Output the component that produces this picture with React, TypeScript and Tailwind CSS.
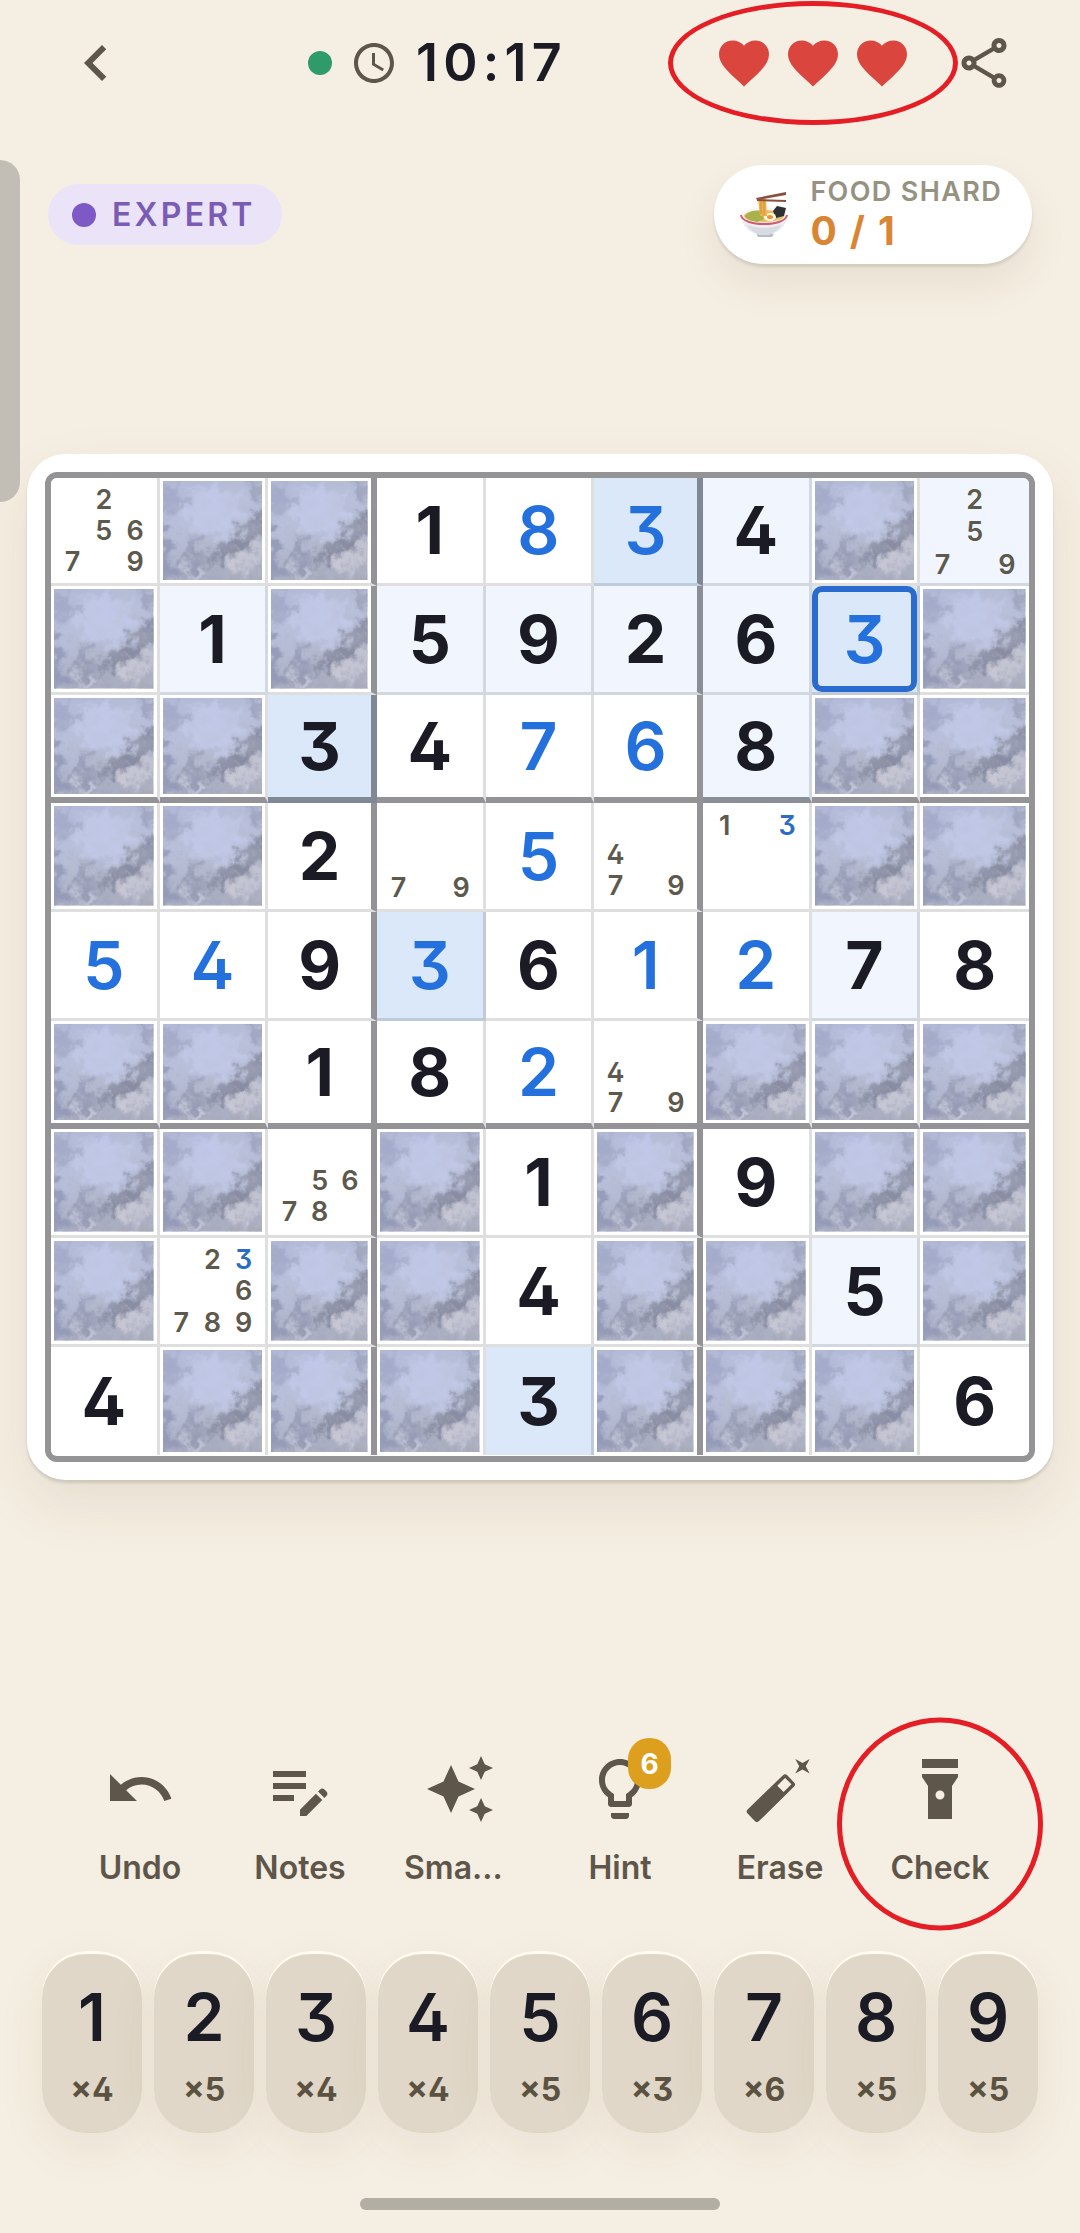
import { useState } from 'react';
import type { ReactNode } from 'react';
import clsx from 'clsx';
import {
  MdAccessTime,
  MdAutoAwesome,
  MdChevronLeft,
  MdEditNote,
  MdFavorite,
  MdFlashlightOn,
  MdLightbulbOutline,
  MdOutlineShare,
  MdUndo,
} from 'react-icons/md';

interface Cell {
  value?: number;
  given?: boolean;
  fog?: boolean;
  notes?: number[];
}

// '#' = fog, 'g' = given digit, 'u' = digit entered by the player, 'n' = notes
const PUZZLE = [
  'n25679 # # g1 u8 u3 g4 # n2579',
  '# g1 # g5 g9 g2 g6 u3 #',
  '# # g3 g4 u7 u6 g8 # #',
  '# # g2 n79 u5 n479 n13 # #',
  'u5 u4 g9 u3 g6 u1 u2 g7 g8',
  '# # g1 g8 u2 n479 # # #',
  '# # n5678 # g1 # g9 # #',
  '# n236789 # # g4 # # g5 #',
  'g4 # # # g3 # # # g6',
];

const parseCell = (token: string): Cell => {
  if (token === '#') return { fog: true };
  const digits = token.replace(/\D/g, '').split('').map(Number);
  if (token[0] === 'n') return { notes: digits };
  return { value: digits[0], given: token[0] === 'g' };
};

const BOARD = PUZZLE.map((row) => row.split(' ').map(parseCell));

const DIGITS = [1, 2, 3, 4, 5, 6, 7, 8, 9];
const REMAINING = [4, 5, 4, 4, 5, 3, 6, 5, 5];

const isPeer = (r: number, c: number, sr: number, sc: number) =>
  r === sr ||
  c === sc ||
  (Math.floor(r / 3) === Math.floor(sr / 3) && Math.floor(c / 3) === Math.floor(sc / 3));

const FogDefs = () => (
  <svg className="absolute size-0" aria-hidden="true">
    <defs>
      <linearGradient id="fogBase" x1="0" y1="0" x2="0.35" y2="1">
        <stop offset="0" stopColor="#b1b9d8" />
        <stop offset="0.45" stopColor="#b9c0da" />
        <stop offset="1" stopColor="#abafc2" />
      </linearGradient>
      <filter id="fogWarp" x="-20%" y="-20%" width="140%" height="140%">
        <feGaussianBlur stdDeviation="3" result="soft" />
        <feTurbulence type="fractalNoise" baseFrequency="0.08" numOctaves="5" seed="8" result="noise" />
        <feDisplacementMap in="soft" in2="noise" scale="34" xChannelSelector="R" yChannelSelector="G" />
        <feGaussianBlur stdDeviation="0.6" />
      </filter>
      <filter id="fogGrain" x="0" y="0" width="100%" height="100%">
        <feTurbulence type="fractalNoise" baseFrequency="0.05 0.07" numOctaves="5" seed="4" />
        <feColorMatrix values="0 0 0 0 0.48  0 0 0 0 0.51  0 0 0 0 0.62  2.8 0 0 0 -1.2" />
      </filter>
      <symbol id="fogTile" viewBox="0 0 100 100" preserveAspectRatio="none">
        <rect width="100" height="100" fill="url(#fogBase)" />
        <g filter="url(#fogWarp)">
          <ellipse cx="50" cy="30" rx="28" ry="26" fill="#c2caea" opacity="0.85" />
          <path d="M-8 40 L6 50 L12 100 L-8 105Z" fill="#858dae" opacity="0.65" />
          <path d="M-5 2 L14 4 L24 24 L0 38Z" fill="#989fc0" opacity="0.55" />
          <path d="M76 -4 L106 -4 L104 22 L90 14Z" fill="#8f95ad" opacity="0.6" />
          <path d="M108 28 L88 40 L66 58 L44 76 L54 88 L74 74 L108 54Z" fill="#7b8096" opacity="0.75" />
          <path d="M10 98 L30 56 L42 76 L46 98Z" fill="#8b92ac" opacity="0.7" />
          <ellipse cx="80" cy="80" rx="16" ry="9" fill="#cbcad6" opacity="0.9" />
          <ellipse cx="95" cy="66" rx="10" ry="8" fill="#c6c7d4" opacity="0.85" />
          <ellipse cx="30" cy="91" rx="13" ry="5" fill="#ccd0e0" opacity="0.85" />
          <path d="M60 104 L104 92 L104 106Z" fill="#a0a0a8" opacity="0.6" />
        </g>
        <rect width="100" height="100" filter="url(#fogGrain)" opacity="0.3" />
      </symbol>
    </defs>
  </svg>
);

const RamenIcon = () => (
  <svg viewBox="0 0 48 48" className="size-12" aria-hidden="true">
    <path d="M16 42h18l-2 4H18z" fill="#b9bcc4" />
    <path d="M1 24c0 11 9 20 23 20s23-9 23-20z" fill="#eeeff3" />
    <path d="M6 33c5 8 12 11 18 11s14-3 18-11c-8 5-28 5-36 0z" fill="#d9dbe3" />
    <ellipse cx="24" cy="24" rx="23" ry="8" fill="#f7f7f9" />
    <ellipse cx="24" cy="25" rx="20" ry="6" fill="#e3c264" />
    <path d="M5 25c3-5 9-6 15-5l4 8-7 3C10 30 6 28 5 25z" fill="#a9b14a" />
    <path d="M1 24c1 12 45 12 46 0" fill="none" stroke="#d2596b" strokeWidth="2" />
    <path d="M33 20l4-5 9 2-2 8-8 2z" fill="#2b3036" />
    <ellipse cx="30" cy="26" rx="6" ry="4" fill="#fdf6e8" />
    <ellipse cx="30" cy="26" rx="3" ry="2" fill="#f0932b" />
    <path d="M18 8h8l1 17h-7z" fill="#eeb04c" />
    <path d="M21 8v15M24 8v16" stroke="#d3923a" strokeWidth="1" />
    <path d="M16 7L46 1v3L17 9z" fill="#8a4f3d" />
    <path d="M17 8l29 1v2l-29-1z" fill="#8a4f3d" />
  </svg>
);

const EraseIcon = () => (
  <svg viewBox="0 0 24 24" className="size-[72px]" fill="currentColor" aria-hidden="true">
    <path
      fillRule="evenodd"
      d="M13 7.4a1 1 0 0 1 1.4 0l2.3 2.4a1 1 0 0 1 0 1.4L5 22.7a1 1 0 0 1-1.4 0L1.2 20.2a1 1 0 0 1 0-1.4zM13.7 8.3l-2.6 2.6 2.1 2.1 2.6-2.6z"
    />
    <path d="M17.1 2l2.4 1.3L21.9 2l-1.3 2.4 1.3 2.4-2.4-1.3-2.4 1.3 1.3-2.4z" />
  </svg>
);

const Notes = ({ notes, active }: { notes: number[]; active: number }) => (
  <span className="grid aspect-square w-full grid-cols-3 grid-rows-3 self-start p-[6px]">
    {DIGITS.map((d) => (
      <span
        key={d}
        className={clsx(
          'flex items-center justify-center text-[27px] leading-none font-semibold',
          d === active ? 'text-[#2b6cc4]' : 'text-[#5d594d]',
        )}
      >
        {notes.includes(d) ? d : ''}
      </span>
    ))}
  </span>
);

interface CellButtonProps {
  cell: Cell;
  row: number;
  col: number;
  selected: boolean;
  peer: boolean;
  activeDigit: number;
  onSelect: () => void;
}

const CellButton = ({ cell, row, col, selected, peer, activeDigit, onSelect }: CellButtonProps) => {
  const same = cell.value !== undefined && cell.value === activeDigit;
  return (
    <button
      type="button"
      aria-label={`Row ${row + 1}, column ${col + 1}`}
      onClick={onSelect}
      className={clsx(
        'relative flex min-h-0 min-w-0 items-center justify-center',
        col === 8 ? 'border-r-0' : col % 3 === 2 ? 'border-r-6' : 'border-r-3',
        row === 8 ? 'border-b-0' : row % 3 === 2 ? 'border-b-6' : 'border-b-3',
        col % 3 === 2 ? 'border-r-[#1a1a24]/47' : 'border-r-[#1a1a24]/14',
        row % 3 === 2 ? 'border-b-[#1a1a24]/47' : 'border-b-[#1a1a24]/14',
        same ? 'bg-[#dbe8f9]' : peer && !cell.fog ? 'bg-[#f1f6fe]' : 'bg-white',
      )}
    >
      {cell.fog && (
        <span className="flex size-full p-[3px]">
          <svg className="size-full" aria-hidden="true">
            <use href="#fogTile" width="100%" height="100%" />
          </svg>
        </span>
      )}
      {cell.notes && <Notes notes={cell.notes} active={activeDigit} />}
      {cell.value !== undefined && (
        <span
          className={clsx(
            'text-[66px] leading-none',
            cell.given ? 'font-bold text-[#1b1b25]' : 'font-semibold text-[#2470dc]',
          )}
        >
          {cell.value}
        </span>
      )}
      {selected && <span className="absolute inset-0 rounded-[10px] border-6 border-[#2a6bd0]" />}
    </button>
  );
};

interface ToolButtonProps {
  label: string;
  icon: ReactNode;
  truncated?: boolean;
  badge?: number;
  marked?: boolean;
}

const ToolButton = ({ label, icon, truncated, badge, marked }: ToolButtonProps) => (
  <button type="button" className="relative flex flex-1 flex-col items-center gap-[25px] pb-2 text-[#5e564a]">
    <span className="relative">
      {icon}
      {badge !== undefined && (
        <span className="absolute -top-[15px] -right-[15px] flex h-[51px] w-[43px] items-center justify-center rounded-[21px] bg-[#dd9f1e] text-[28px] leading-none font-bold text-white">
          {badge}
        </span>
      )}
    </span>
    <span className={clsx('text-[32px] leading-9 font-semibold', truncated && 'w-[112px] text-left')}>
      {label}
    </span>
    {marked && (
      <span className="absolute top-1/2 left-1/2 h-[213px] w-[206px] -translate-1/2 rounded-[50%] border-5 border-[#e51d24]" />
    )}
  </button>
);

export default function App() {
  const [selected, setSelected] = useState({ row: 1, col: 7 });
  const activeDigit = BOARD[selected.row][selected.col].value ?? 0;

  return (
    <div className="relative flex min-h-screen flex-col overflow-hidden bg-[#f5eee2] font-['Inter','Liberation_Sans',sans-serif] [font-feature-settings:'cv02','cv09']">
      <FogDefs />
      <div className="absolute top-40 left-0 h-[342px] w-5 rounded-r-[20px] bg-[#c2bdb5]" />

      <header className="flex h-[126px] items-center pr-[66px] pl-[60px] text-[#5e564a]">
        <button type="button" aria-label="Back">
          <MdChevronLeft className="size-[72px]" />
        </button>
        <div className="ml-44 flex items-center gap-[18px]">
          <span className="size-6 rounded-full bg-[#2f9b6b]" />
          <MdAccessTime className="size-12" />
          <span className="text-[52px] leading-none font-semibold tracking-widest text-[#1b1b25]">10:17</span>
        </div>
        <div className="relative ml-auto flex gap-[9px] text-[#da453d]">
          <MdFavorite className="size-[60px]" />
          <MdFavorite className="size-[60px]" />
          <MdFavorite className="size-[60px]" />
          <span className="absolute top-1/2 left-1/2 h-[124px] w-[290px] -translate-1/2 rounded-[50%] border-5 border-[#e51d24]" />
        </div>
        <button type="button" aria-label="Share" className="ml-[42px]">
          <MdOutlineShare className="size-[60px]" />
        </button>
      </header>

      <div className="mt-[39px] flex items-center justify-between px-12">
        <div className="flex h-[61px] items-center gap-4 rounded-full bg-[#ebe4f8] pr-[26px] pl-6">
          <span className="size-6 rounded-full bg-[#7e59c6]" />
          <span className="text-[32px] leading-none font-semibold tracking-widest text-[#7a5cb5]">EXPERT</span>
        </div>
        <div className="flex h-[99px] items-center gap-[22px] rounded-full bg-white pr-[30px] pl-[26px] shadow-[0_3px_3px_#0000001a,0_20px_40px_#5a461e14]">
          <RamenIcon />
          <div className="flex flex-col">
            <span className="text-[27px] leading-8 font-semibold tracking-wider text-[#969282]">FOOD SHARD</span>
            <span className="text-[39px] leading-[46px] font-bold tracking-wider text-[#d98634]">0 / 1</span>
          </div>
        </div>
      </div>

      <main className="flex flex-1 flex-col justify-center px-[27px]">
        <div className="rounded-[38px] bg-white p-[18px] shadow-[0_3px_3px_#0000001f,0_24px_60px_#5a461e17]">
          <div className="grid aspect-square grid-cols-9 grid-rows-9 overflow-hidden rounded-xl border-6 border-[#949497]">
            {BOARD.map((cells, row) =>
              cells.map((cell, col) => (
                <CellButton
                  key={`${row}-${col}`}
                  cell={cell}
                  row={row}
                  col={col}
                  selected={row === selected.row && col === selected.col}
                  peer={isPeer(row, col, selected.row, selected.col)}
                  activeDigit={activeDigit}
                  onSelect={() => setSelected({ row, col })}
                />
              )),
            )}
          </div>
        </div>
      </main>

      <nav className="flex px-[60px] pt-[84px]">
        <ToolButton label="Undo" icon={<MdUndo className="size-[72px]" />} />
        <ToolButton label="Notes" icon={<MdEditNote className="size-[72px]" />} />
        <ToolButton label="Sma..." icon={<MdAutoAwesome className="size-[72px]" />} truncated />
        <ToolButton label="Hint" icon={<MdLightbulbOutline className="size-[72px]" />} badge={6} />
        <ToolButton label="Erase" icon={<EraseIcon />} />
        <ToolButton label="Check" icon={<MdFlashlightOn className="size-[72px]" />} marked />
      </nav>

      <div className="mt-[57px] flex gap-3 px-[42px]">
        {DIGITS.map((d, i) => (
          <button
            key={d}
            type="button"
            className="flex h-[182px] flex-1 flex-col items-center rounded-[44px] bg-[#e0d7c8] pt-[33px] shadow-[inset_0_3px_0_#fffaf0,0_16px_50px_#5a461e12]"
          >
            <span className="text-[66px] leading-[66px] font-semibold text-[#1b1b25]">{d}</span>
            <span className="mt-[22px] text-[32px] leading-9 font-bold text-[#5c5242]">×{REMAINING[i]}</span>
          </button>
        ))}
      </div>

      <div className="mx-auto mt-[65px] mb-[23px] h-3 w-1/3 rounded-full bg-[#b3aea4]" />
    </div>
  );
}
